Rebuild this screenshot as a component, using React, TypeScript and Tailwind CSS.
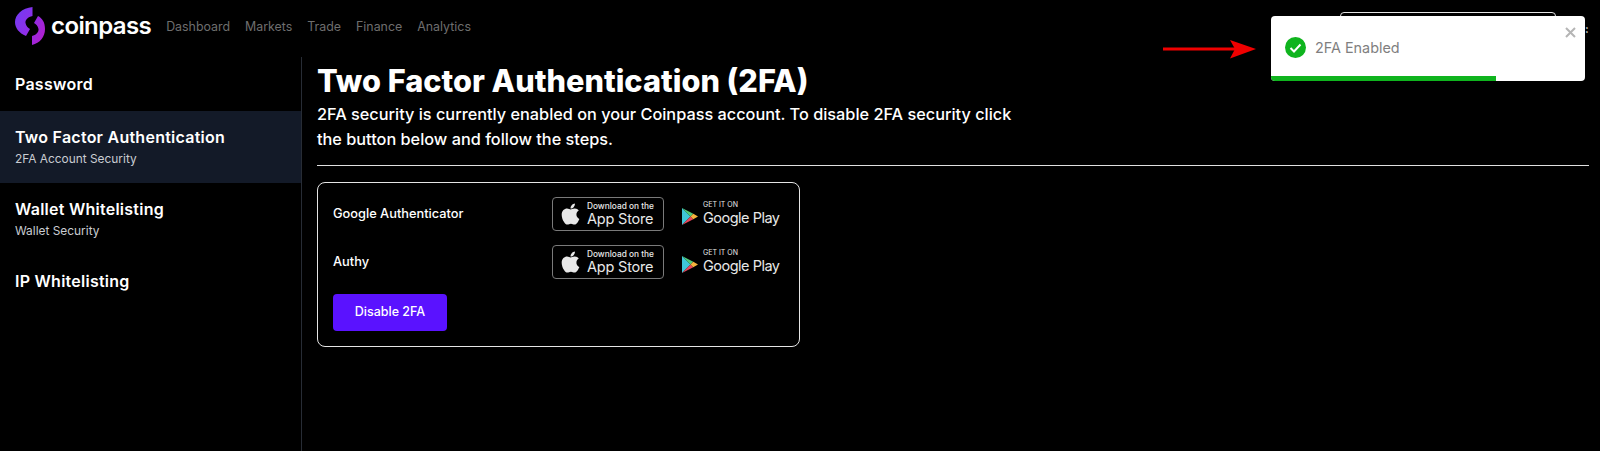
import { FaApple } from "react-icons/fa";

const font = "font-['Inter','Liberation_Sans',sans-serif]";

function Logo() {
  return (
    <svg width="30" height="38" viewBox="0 0 30 38" className="mb-[6px] shrink-0">
      <defs>
        <linearGradient id="lg1" x1="0" y1="0" x2="1" y2="1">
          <stop offset="0" stopColor="#6f3cf4" />
          <stop offset="1" stopColor="#9a2ae4" />
        </linearGradient>
        <linearGradient id="lg2" x1="0" y1="0" x2="1" y2="1">
          <stop offset="0" stopColor="#8a2fe8" />
          <stop offset="1" stopColor="#b81cc8" />
        </linearGradient>
      </defs>
      <path d="M17.500 0 V9 C13 10 10 13 10.500 16 C11 19 13 21 15 22 L11 29 C4 26 0 21 0 15 C0 8 7 1 17.500 0 Z" fill="url(#lg1)" />
      <path d="M17 38 V29 C21 28 24 25 23.500 22 C23 19 21 17 19 16 L23 9 C27 11 30 15 30 22 C30 30 25 36 17 38 Z" fill="url(#lg2)" />
    </svg>
  );
}

function AppStore() {
  return (
    <div className="flex h-[34px] w-[112px] items-center rounded-[4px] border border-[#7a7a7a] pl-[8px] text-[#e8e8e8]">
      <FaApple className="mr-[7px] h-[24px] w-[19px] shrink-0" />
      <div className="flex flex-col">
        <span className="text-[8.300px] leading-[9px] font-medium whitespace-nowrap">Download on the</span>
        <span className="text-[14.500px] leading-[16px] whitespace-nowrap tracking-[-0.2px]">App Store</span>
      </div>
    </div>
  );
}

function GooglePlay() {
  return (
    <div className="flex h-[34px] w-[100px] items-center text-[#e8e8e8]">
      <svg width="16" height="17" viewBox="0 0 17 18" className="mt-[5px] mr-[5px] shrink-0">
        <path d="M0 0 L9 9 L0 18 Z" fill="#3ec6d8" />
        <path d="M0 0 L12 6 L9 9 Z" fill="#4fc978" />
        <path d="M0 18 L12 12 L9 9 Z" fill="#e8475c" />
        <path d="M12 6 L17 9 L12 12 L9 9 Z" fill="#f6b23c" />
      </svg>
      <div className="flex flex-col">
        <span className="text-[7px] leading-[8px] whitespace-nowrap">GET IT ON</span>
        <span className="text-[14.500px] leading-[18px] whitespace-nowrap tracking-[-0.5px]">Google Play</span>
      </div>
    </div>
  );
}

function AppRow({ name }: { name: string }) {
  return (
    <div className="flex h-[34px] items-center">
      <div className="w-[219px] text-[12.800px] font-medium text-white">{name}</div>
      <AppStore />
      <div className="w-[18px]" />
      <GooglePlay />
    </div>
  );
}

export default function App() {
  return (
    <div className={`relative h-[451px] w-[1600px] overflow-hidden bg-black text-white ${font}`}>
      <header className="flex h-[57px] items-center pl-[15px]">
        <div className="flex items-center">
          <Logo />
          <span className="ml-[6px] pb-[6px] text-[24px] leading-none font-semibold tracking-[-0.6px]">coinpass</span>
        </div>
        <nav className="ml-[15px] flex gap-[15px] pb-[3px] text-[12.400px] text-[#6e6e6e]">
          <span>Dashboard</span>
          <span>Markets</span>
          <span>Trade</span>
          <span>Finance</span>
          <span>Analytics</span>
        </nav>
        <div className="mr-[44px] mb-[4px] ml-auto h-[30px] w-[216px] rounded-[4px] border border-[#e5e5e5]" />
      </header>

      <div className="flex h-[394px]">
        <aside className="w-[302px] shrink-0 border-r border-[#272c35]">
          <div className="flex h-[54px] items-center pl-[15px] text-[16px] font-semibold tracking-[0.25px]">Password</div>
          <div className="h-[72px] bg-[#131a28] pt-[14px] pl-[15px]">
            <div className="text-[16px] leading-[24px] font-semibold tracking-[0.25px]">Two Factor Authentication</div>
            <div className="mt-[1px] text-[11.900px] leading-[18px] text-[#c9ccd2]">2FA Account Security</div>
          </div>
          <div className="h-[72px] pt-[14px] pl-[15px]">
            <div className="text-[16px] leading-[24px] font-semibold tracking-[0.25px]">Wallet Whitelisting</div>
            <div className="mt-[1px] text-[11.900px] leading-[18px] text-[#c9ccd2]">Wallet Security</div>
          </div>
          <div className="flex h-[52px] items-center pl-[15px] text-[16px] font-semibold tracking-[0.25px]">IP Whitelisting</div>
        </aside>

        <main className="flex-1 pr-[11px] pl-[15px]">
          <h1 className="pt-[3px] text-[30.700px] leading-[42px] font-extrabold">Two Factor Authentication (2FA)</h1>
          <p className="w-[700px] text-[16.300px] leading-[24.500px] font-medium">
            2FA security is currently enabled on your Coinpass account. To disable 2FA security click the button below and follow the steps.
          </p>
          <div className="mt-[14px] h-px bg-[#e0e0e0]" />
          <div className="mt-[16px] h-[165px] w-[483px] rounded-[8px] border border-[#e5e5e5] px-[15px] pt-[14px]">
            <div className="flex flex-col gap-[14px]">
              <AppRow name="Google Authenticator" />
              <AppRow name="Authy" />
            </div>
            <button className="mt-[15px] h-[37px] w-[114px] rounded-[4px] bg-[#5a12ff] text-[12.500px] font-medium text-white">Disable 2FA</button>
          </div>
        </main>
      </div>

      {/* annotation arrow */}
      <svg width="94" height="20" viewBox="0 0 94 20" className="absolute top-[40px] left-[1163px]">
        <rect x="0" y="7.500" width="75" height="3" fill="#f00000" />
        <path d="M67 0 L93 9 L67 18.500 L72 9 Z" fill="#f00000" />
      </svg>

      {/* toast */}
      <div className="absolute top-[16px] left-[1271px] h-[65px] w-[314px] overflow-hidden rounded-[4px] bg-white">
        <div className="flex h-[63px] items-center pl-[14px]">
          <svg width="21" height="21" viewBox="0 0 21 21" className="shrink-0">
            <circle cx="10.500" cy="10.500" r="10.500" fill="#0fb41e" />
            <path d="M5.500 11 L9 14.500 L15.500 7.500" fill="none" stroke="#fff" strokeWidth="2" />
          </svg>
          <span className="ml-[9px] text-[14.400px] text-[#7f7f7f]">2FA Enabled</span>
        </div>
        <svg width="11" height="11" viewBox="0 0 11 11" className="absolute top-[11px] right-[9px]">
          <path d="M1 1 L10 10 M10 1 L1 10" stroke="#b5b5b5" strokeWidth="2" />
        </svg>
        <div className="absolute bottom-0 left-0 h-[5px] w-[225px] bg-[#0fb41e]" />
      </div>
      <span className="absolute top-[22px] left-[1585px] text-[11px] leading-[14px] font-bold text-[#d5d5d5]">:</span>
    </div>
  );
}
